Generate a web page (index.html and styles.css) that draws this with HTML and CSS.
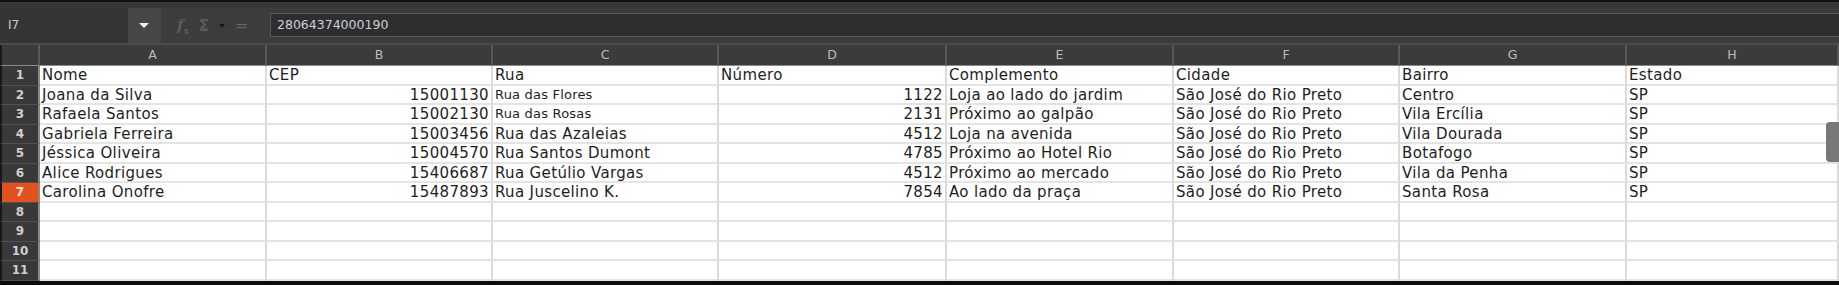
FILE: index.html
```html
<!DOCTYPE html>
<html lang="pt-BR">
<head>
    <meta charset="UTF-8">
    <title>Planilha - Clientes</title>
    <link rel="stylesheet" href="styles.css">
</head>

<body>
    <div class="window">
        <!-- bottom of the toolbar above -->
        <div class="top-strip"></div>

        <!-- Name box and formula bar -->
        <div class="formula-bar">
            <div class="name-box">I7</div>
            <div class="name-drop"><span class="tri"></span></div>
            <div class="tools">
                <span class="fx">f<sub>x</sub></span>
                <span class="sigma">&Sigma;</span>
                <span class="tri dark"></span>
                <span class="equals">=</span>
            </div>
            <div class="input-line">28064374000190</div>
        </div>

        <!-- Sheet -->
        <div class="sheet">
            <div class="row head">
                <div class="corner"></div>
                <div>A</div><div>B</div><div>C</div><div>D</div>
                <div>E</div><div>F</div><div>G</div><div>H</div>
            </div>

            <div class="row">
                <div class="num">1</div>
                <div>Nome</div><div>CEP</div><div>Rua</div><div>Número</div>
                <div>Complemento</div><div>Cidade</div><div>Bairro</div><div>Estado</div>
            </div>
            <div class="row">
                <div class="num">2</div>
                <div>Joana da Silva</div><div class="right">15001130</div><div class="small">Rua das Flores</div><div class="right">1122</div>
                <div>Loja ao lado do jardim</div><div>São José do Rio Preto</div><div>Centro</div><div>SP</div>
            </div>
            <div class="row">
                <div class="num">3</div>
                <div>Rafaela Santos</div><div class="right">15002130</div><div class="small">Rua das Rosas</div><div class="right">2131</div>
                <div>Próximo ao galpão</div><div>São José do Rio Preto</div><div>Vila Ercília</div><div>SP</div>
            </div>
            <div class="row">
                <div class="num">4</div>
                <div>Gabriela Ferreira</div><div class="right">15003456</div><div>Rua das Azaleias</div><div class="right">4512</div>
                <div>Loja na avenida</div><div>São José do Rio Preto</div><div>Vila Dourada</div><div>SP</div>
            </div>
            <div class="row">
                <div class="num">5</div>
                <div>Jéssica Oliveira</div><div class="right">15004570</div><div>Rua Santos Dumont</div><div class="right">4785</div>
                <div>Próximo ao Hotel Rio</div><div>São José do Rio Preto</div><div>Botafogo</div><div>SP</div>
            </div>
            <div class="row">
                <div class="num">6</div>
                <div>Alice Rodrigues</div><div class="right">15406687</div><div>Rua Getúlio Vargas</div><div class="right">4512</div>
                <div>Próximo ao mercado</div><div>São José do Rio Preto</div><div>Vila da Penha</div><div>SP</div>
            </div>
            <div class="row">
                <div class="num active">7</div>
                <div>Carolina Onofre</div><div class="right">15487893</div><div>Rua Juscelino K.</div><div class="right">7854</div>
                <div>Ao lado da praça</div><div>São José do Rio Preto</div><div>Santa Rosa</div><div>SP</div>
            </div>
            <div class="row">
                <div class="num">8</div>
                <div></div><div></div><div></div><div></div><div></div><div></div><div></div><div></div>
            </div>
            <div class="row">
                <div class="num">9</div>
                <div></div><div></div><div></div><div></div><div></div><div></div><div></div><div></div>
            </div>
            <div class="row">
                <div class="num">10</div>
                <div></div><div></div><div></div><div></div><div></div><div></div><div></div><div></div>
            </div>
            <div class="row">
                <div class="num">11</div>
                <div></div><div></div><div></div><div></div><div></div><div></div><div></div><div></div>
            </div>

            <!-- vertical scrollbar thumb -->
            <div class="scroll-thumb"></div>
        </div>
    </div>
</body>
</html>
```

FILE: styles.css
```css
body {
    margin: 0;
    padding: 0;
    background-color: #111;
    font-family: "DejaVu Sans", sans-serif;
    overflow: hidden;
}

.window {
    width: 1839px;
    height: 285px;
    background-color: #3c3c3c;
    border-bottom: 4px solid #0c0c0c;
    box-sizing: border-box;
    overflow: hidden;
}

.top-strip {
    height: 6px;
    border-top: 2px solid #101010;
    background-color: #383838;
}

/* formula bar */
.formula-bar {
    display: flex;
    height: 35px;
    border-bottom: 2px solid #4b4b4b;
}

.name-box {
    width: 120px;
    padding-left: 8px;
    background-color: #353535;
    color: #c9ccd0;
    font-size: 12px;
    line-height: 35px;
}

.name-drop {
    width: 32px;
    display: flex;
    align-items: center;
    justify-content: center;
    background-color: #474747;
    border-right: 1px solid #444;
}

.tri {
    width: 0;
    height: 0;
    border-left: 5px solid transparent;
    border-right: 5px solid transparent;
    border-top: 5px solid #f2f2f2;
}

.tri.dark {
    border-left-width: 3px;
    border-right-width: 3px;
    border-top: 4px solid #151515;
}

.tools {
    width: 109px;
    display: flex;
    align-items: center;
    gap: 10px;
    padding-left: 16px;
    box-sizing: border-box;
    color: #5b5b5b;
    font-size: 15px;
}

.fx {
    font-family: "DejaVu Serif", serif;
    font-style: italic;
    font-weight: bold;
}

.fx sub {
    font-size: 9px;
    font-style: normal;
}

.sigma {
    font-weight: bold;
}

.equals {
    color: #666;
    font-size: 16px;
}

.input-line {
    flex: 1;
    margin: 5px 0 6px 0;
    padding-left: 6px;
    background-color: #2e2e2e;
    border: 1px solid #585858;
    border-right: none;
    color: #c6d0da;
    font-size: 12.5px;
    line-height: 22px;
}

/* sheet grid */
.sheet {
    position: relative;
}

.row {
    display: grid;
    grid-template-columns: 40px 227px 226px 226px 228px 227px 226px 227px 1fr;
    height: 19.5px;
    background-color: #fff;
    color: #1e1e1e;
    font-size: 15px;
    letter-spacing: 0.35px;
    line-height: 18px;
}

.row > div {
    border-right: 2px solid #dadada;
    border-bottom: 2px solid #e4e4e4;
    padding: 0 2px;
    white-space: nowrap;
    overflow: hidden;
}

.row .right {
    text-align: right;
}

.row .small {
    font-size: 13px;
    letter-spacing: 0.2px;
}

.row.head {
    height: 21px;
    background-color: #3b3b3b;
    color: #bdbdbd;
    font-size: 12.5px;
    line-height: 20px;
    letter-spacing: 0;
}

.row.head > div {
    text-align: center;
    border-right: 2px solid #585858;
    border-bottom: 1px solid #8a8a8a;
}

.row.head .corner {
    border-left: 2px solid #181818;
    border-right: 2px solid #5a5a5a;
}

.row .num {
    background-color: #393939;
    color: #cfcfcf;
    font-size: 12px;
    font-weight: bold;
    text-align: center;
    border-left: 2px solid #181818;
    border-right: 2px solid #8a8a8a;
    border-bottom: 1px solid #505050;
    letter-spacing: 0;
}

.row .num.active {
    background-color: #e2521f;
    color: #fbe6dc;
}

.scroll-thumb {
    position: absolute;
    top: 77px;
    right: 0;
    width: 13px;
    height: 40px;
    background-color: #787878;
    border-radius: 4px 0 0 4px;
}
```
